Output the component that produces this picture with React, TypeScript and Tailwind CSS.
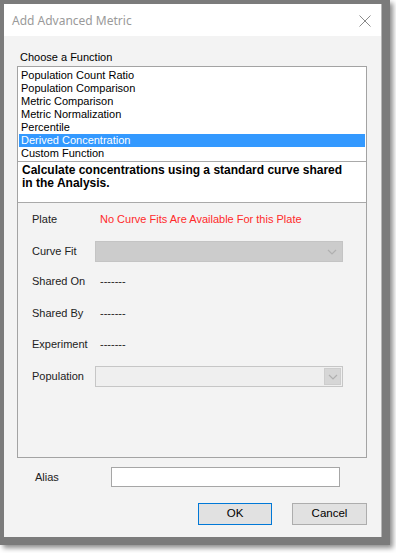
import React from "react";

const items = [
  "Population Count Ratio",
  "Population Comparison",
  "Metric Comparison",
  "Metric Normalization",
  "Percentile",
  "Derived Concentration",
  "Custom Function",
];

function Chevron({ color = "#a8a8a8" }: { color?: string }) {
  return (
    <svg width="10" height="6" viewBox="0 0 10 6">
      <path d="M1 1 L5 5 L9 1" fill="none" stroke={color} strokeWidth="1.2" />
    </svg>
  );
}

export default function App() {
  const font = { fontFamily: '"Liberation Sans", Arial, sans-serif' };
  return (
    <div className="w-[396px] h-[553px] bg-white relative overflow-hidden" style={font}>
      <div className="w-[390px] h-[545px] bg-[#7b7b7b] pl-[4px] pt-[4px] shadow-[3px_3px_5px_rgba(0,0,0,0.45)]">
        <div className="w-[378px] h-[533px] bg-[#f3f3f3] border-r border-[#b5b5b5] flex flex-col">
          {/* Title bar */}
          <div className="h-[32px] bg-white flex items-center justify-between pl-[8px] pr-[10px] shrink-0">
            <span
              className="text-[12px] text-[#9a9a9a] leading-none mt-[1px]"
              style={{ fontFamily: '"Noto Sans", "Open Sans", sans-serif' }}
            >
              Add Advanced Metric
            </span>
            <svg width="12" height="12" viewBox="0 0 12 12" className="mt-[1px]">
              <path d="M0.5 0.5 L11.5 11.5 M11.5 0.5 L0.5 11.5" stroke="#8a8a8a" strokeWidth="1" />
            </svg>
          </div>

          {/* Body */}
          <div className="flex flex-col pl-[13px] text-[11px] text-[#111]">
            <div className="h-[13px] leading-[13px] mt-[15px] pl-[3px] text-black">Choose a Function</div>
            <div className="w-[350px] mt-[2px] border border-[#a3a3a3] flex flex-col">
              {/* list */}
              <div className="bg-white pt-[2px] pb-[1px] px-[1px] border-b border-[#a9a9a9]">
                {items.map((it) => (
                  <div
                    key={it}
                    className={
                      "h-[13px] leading-[13px] pl-[2px] " +
                      (it === "Derived Concentration" ? "bg-[#3399ff] text-white" : "text-black")
                    }
                  >
                    {it}
                  </div>
                ))}
              </div>
              {/* description */}
              <div className="bg-white h-[41px] pl-[4px] pt-[2px] border-b border-[#a9a9a9] font-bold text-black text-[12px] leading-[13px]">
                Calculate concentrations using a standard curve shared
                <br />
                in the Analysis.
              </div>
              {/* panel */}
              <div className="h-[254px] bg-[#f3f3f3] pl-[14px] pt-[6px] text-[#222]">
                <div className="h-[21px] flex items-center">
                  <span className="w-[68px]">Plate</span>
                  <span className="text-[#ff2a2a]">No Curve Fits Are Available For this Plate</span>
                </div>
                <div className="h-[21px] flex items-center mt-[11px]">
                  <span className="w-[63px]">Curve Fit</span>
                  <div className="w-[248px] h-[21px] bg-[#cccccc] border border-[#c4c4c4] flex items-center justify-end pr-[5px]">
                    <Chevron color="#b0b0b0" />
                  </div>
                </div>
                <div className="h-[21px] flex items-center mt-[9px]">
                  <span className="w-[68px]">Shared On</span>
                  <span>-------</span>
                </div>
                <div className="h-[21px] flex items-center mt-[11px]">
                  <span className="w-[68px]">Shared By</span>
                  <span>-------</span>
                </div>
                <div className="h-[21px] flex items-center mt-[10px]">
                  <span className="w-[68px]">Experiment</span>
                  <span>-------</span>
                </div>
                <div className="h-[21px] flex items-center mt-[11px]">
                  <span className="w-[63px]">Population</span>
                  <div className="w-[248px] h-[21px] bg-[#efefef] border border-[#c6c6c6] flex items-stretch justify-end p-[1px]">
                    <div className="w-[17px] bg-[#d6d6d6] border border-[#cdcdcd] flex items-center justify-center">
                      <Chevron color="#b0b0b0" />
                    </div>
                  </div>
                </div>
              </div>
            </div>

            {/* Alias */}
            <div className="flex items-center mt-[9px] h-[20px]">
              <span className="w-[94px] pl-[18px] text-[#222]">Alias</span>
              <div className="w-[229px] h-[20px] bg-white border border-[#a6a6a6]" />
            </div>

            {/* Buttons */}
            <div className="flex mt-[16px] w-[350px] justify-end gap-[20px]">
              <div className="w-[74px] h-[22px] bg-[#e1e1e1] border border-[#0078d7] flex items-center justify-center text-black text-[11.5px]">
                OK
              </div>
              <div className="w-[75px] h-[22px] bg-[#e1e1e1] border border-[#adadad] flex items-center justify-center text-black text-[11.5px]">
                Cancel
              </div>
            </div>
          </div>
        </div>
      </div>
    </div>
  );
}
